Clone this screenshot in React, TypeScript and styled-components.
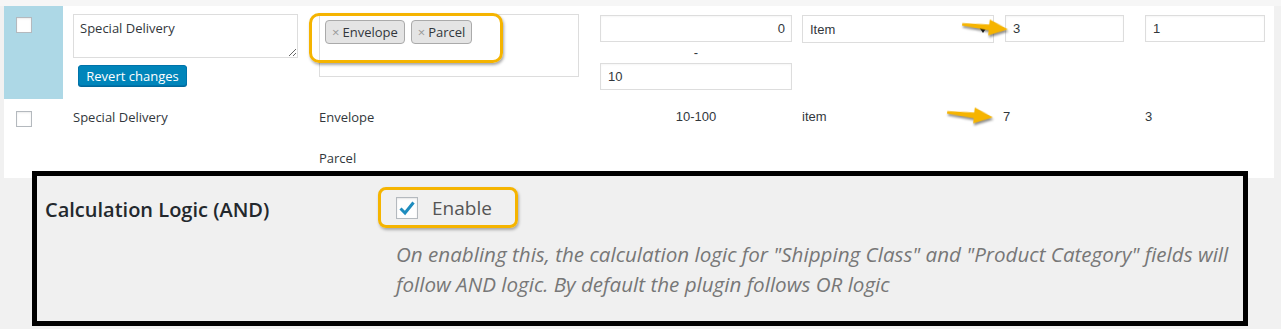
import React from 'react'
import styled, { createGlobalStyle } from 'styled-components'

const GlobalStyle = createGlobalStyle`
  body {
    margin: 0;
    background: #f1f1f1;
    font-family: 'Open Sans', 'Noto Sans', sans-serif;
    color: #32373c;
  }
  * {
    box-sizing: border-box;
  }
`

const COLS = '59px 246px 281px 202px 203px 140px 139px'

const TopBand = styled.div`
  height: 6px;
  background: #f6f6f6;
`

const RatesTable = styled.div`
  margin-left: 4px;
  width: 1270px;
  background: #fff;
`

const Row = styled.div<{ $height: number }>`
  display: grid;
  grid-template-columns: ${COLS};
  height: ${(p) => p.$height}px;
`

const Cell = styled.div<{ $top?: number; $left?: number; $align?: string; $mono?: boolean; $bg?: string }>`
  position: relative;
  padding: ${(p) => p.$top ?? 8}px 0 0 ${(p) => p.$left ?? 10}px;
  text-align: ${(p) => p.$align ?? 'left'};
  background: ${(p) => p.$bg ?? 'transparent'};
  font-family: ${(p) => (p.$mono ? "'Liberation Sans', Arial, sans-serif" : "'Open Sans', sans-serif")};
  font-size: 13px;
  line-height: 20px;
  color: #32373c;
`

const Check = styled.span`
  display: block;
  width: 16px;
  height: 16px;
  border: 1px solid #b4b9be;
  background: #fff;
  box-shadow: inset 0 1px 2px rgba(0, 0, 0, 0.08);
`

const NameArea = styled.textarea`
  display: block;
  width: 225px;
  height: 44px;
  border: 1px solid #ddd;
  padding: 3px 6px;
  font-family: 'Open Sans', sans-serif;
  font-size: 13px;
  line-height: 20px;
  color: #32373c;
  resize: both;
`

const RevertButton = styled.button`
  display: block;
  margin: 7px 0 0 5px;
  width: 109px;
  height: 21px;
  padding: 0;
  border: 1px solid #0073aa;
  border-radius: 3px;
  background: #0085ba;
  box-shadow: 0 1px 0 #006799;
  color: #fff;
  font-family: 'Open Sans', sans-serif;
  font-size: 13px;
  line-height: 18px;
`

const TagBox = styled.div`
  display: flex;
  align-items: flex-start;
  gap: 6px;
  width: 260px;
  height: 63px;
  padding: 5px;
  border: 1px solid #ddd;
`

const Tag = styled.span`
  display: inline-flex;
  align-items: center;
  height: 24px;
  padding: 0 6px 0 6px;
  background: #e4e4e4;
  border: 1px solid #aaa;
  border-radius: 4px;
  font-size: 13px;
  color: #32373c;

  b {
    font-weight: 400;
    color: #999;
    margin-right: 3px;
  }
`

const Highlight = styled.div<{ $x: number; $y: number; $w: number; $h: number }>`
  position: absolute;
  left: ${(p) => p.$x}px;
  top: ${(p) => p.$y}px;
  width: ${(p) => p.$w}px;
  height: ${(p) => p.$h}px;
  border: 3px solid #f5b400;
  border-radius: 10px;
  box-shadow: 1px 2px 3px rgba(0, 0, 0, 0.35);
  pointer-events: none;
`

const Field = styled.input<{ $w: number; $align?: string }>`
  display: block;
  width: ${(p) => p.$w}px;
  height: 27px;
  border: 1px solid #ddd;
  padding: 0 6px 0 7px;
  text-align: ${(p) => p.$align ?? 'left'};
  font-family: 'Liberation Sans', Arial, sans-serif;
  font-size: 13px;
  color: #32373c;
  background: #fff;
  box-shadow: inset 0 1px 2px rgba(0, 0, 0, 0.04);
`

const Dash = styled.div`
  width: 192px;
  height: 21px;
  line-height: 21px;
  text-align: center;
  font-family: 'Liberation Sans', Arial, sans-serif;
`

const SelectBox = styled.div`
  position: relative;
  width: 192px;
  height: 28px;
  border: 1px solid #ddd;
  padding-left: 7px;
  line-height: 27px;
  font-family: 'Liberation Sans', Arial, sans-serif;
  font-size: 13px;

  &::after {
    content: '';
    position: absolute;
    right: 6px;
    top: 11px;
    border-left: 4px solid transparent;
    border-right: 4px solid transparent;
    border-top: 6px solid #222;
  }
`

const ClassList = styled.div`
  display: flex;
  flex-direction: column;
  gap: 21px;
`

const ArrowMark = styled.svg<{ $x: number; $y: number }>`
  position: absolute;
  left: ${(p) => p.$x}px;
  top: ${(p) => p.$y}px;
  transform: rotate(6deg);
  filter: drop-shadow(1px 2px 1px rgba(0, 0, 0, 0.45));
  overflow: visible;
`

const SettingsBox = styled.div`
  position: relative;
  margin: -7px 0 0 32px;
  width: 1216px;
  height: 155px;
  border: 5px solid #000;
  background: #f0f0f0;
  display: grid;
  grid-template-columns: 341px 1fr;
`

const SettingLabel = styled.div`
  padding: 21px 0 0 8px;
  font-size: 20px;
  font-weight: 600;
  line-height: 26px;
  color: #23282d;
`

const SettingField = styled.div`
  padding-top: 11px;
`

const EnableLabel = styled.label`
  display: inline-flex;
  align-items: center;
  gap: 14px;
  width: 140px;
  height: 41px;
  padding-left: 15px;
  border: 3px solid #f5b400;
  border-radius: 8px;
  box-shadow: 1px 2px 3px rgba(0, 0, 0, 0.3);
  font-size: 19px;
  color: #555;
`

const BigCheck = styled.span`
  display: flex;
  align-items: center;
  justify-content: center;
  width: 22px;
  height: 22px;
  border: 1px solid #b4b9be;
  background: #fefefe;
  box-shadow: inset 0 1px 2px rgba(0, 0, 0, 0.1);
`

const Description = styled.p`
  margin: 11px 0 0 18px;
  font-size: 20.6px;
  font-style: italic;
  line-height: 30px;
  color: #777;
  white-space: nowrap;
`

function Arrow({ x, y }: { x: number; y: number }) {
  return (
    <ArrowMark $x={x} $y={y} width="46" height="16" viewBox="0 0 46 16">
      <polygon points="0,6.5 29,5 29,11 0,9" fill="#f6b400" />
      <polygon points="27,0 46,8 27,16" fill="#f6b400" />
    </ArrowMark>
  )
}

export default function App() {
  return (
    <>
      <GlobalStyle />
      <TopBand />
      <RatesTable>
        <Row $height={93}>
          <Cell $bg="#add8e6" $top={11} $left={12}>
            <Check />
          </Cell>
          <Cell>
            <NameArea defaultValue="Special Delivery" />
            <RevertButton type="button">Revert changes</RevertButton>
          </Cell>
          <Cell>
            <TagBox>
              <Tag>
                <b>×</b>Envelope
              </Tag>
              <Tag>
                <b>×</b>Parcel
              </Tag>
            </TagBox>
            <Highlight $x={0} $y={7} $w={194} $h={50} />
          </Cell>
          <Cell $top={9}>
            <Field $w={192} $align="right" defaultValue="0" readOnly />
            <Dash>-</Dash>
            <Field $w={192} defaultValue="10" readOnly />
          </Cell>
          <Cell $top={9}>
            <SelectBox>Item</SelectBox>
          </Cell>
          <Cell $top={9}>
            <Field $w={119} defaultValue="3" readOnly />
            <Arrow x={-33} y={13} />
          </Cell>
          <Cell $top={9}>
            <Field $w={120} defaultValue="1" readOnly />
          </Cell>
        </Row>
        <Row $height={79}>
          <Cell $top={12} $left={12}>
            <Check />
          </Cell>
          <Cell>Special Delivery</Cell>
          <Cell>
            <ClassList>
              <span>Envelope</span>
              <span>Parcel</span>
            </ClassList>
          </Cell>
          <Cell $mono $align="center">
            10-100
          </Cell>
          <Cell $mono>item</Cell>
          <Cell $mono $left={8}>
            7
            <Arrow x={-48} y={8} />
          </Cell>
          <Cell $mono>3</Cell>
        </Row>
      </RatesTable>
      <SettingsBox>
        <SettingLabel>Calculation Logic (AND)</SettingLabel>
        <SettingField>
          <EnableLabel>
            <BigCheck>
              <svg width="18" height="16" viewBox="0 0 18 16">
                <path d="M2.5 8.5 L7 13 L15.5 2.5" fill="none" stroke="#1e8cbe" strokeWidth="3" />
              </svg>
            </BigCheck>
            Enable
          </EnableLabel>
          <Description>
            On enabling this, the calculation logic for "Shipping Class" and "Product Category" fields will
            <br />
            follow AND logic. By default the plugin follows OR logic
          </Description>
        </SettingField>
      </SettingsBox>
    </>
  )
}
